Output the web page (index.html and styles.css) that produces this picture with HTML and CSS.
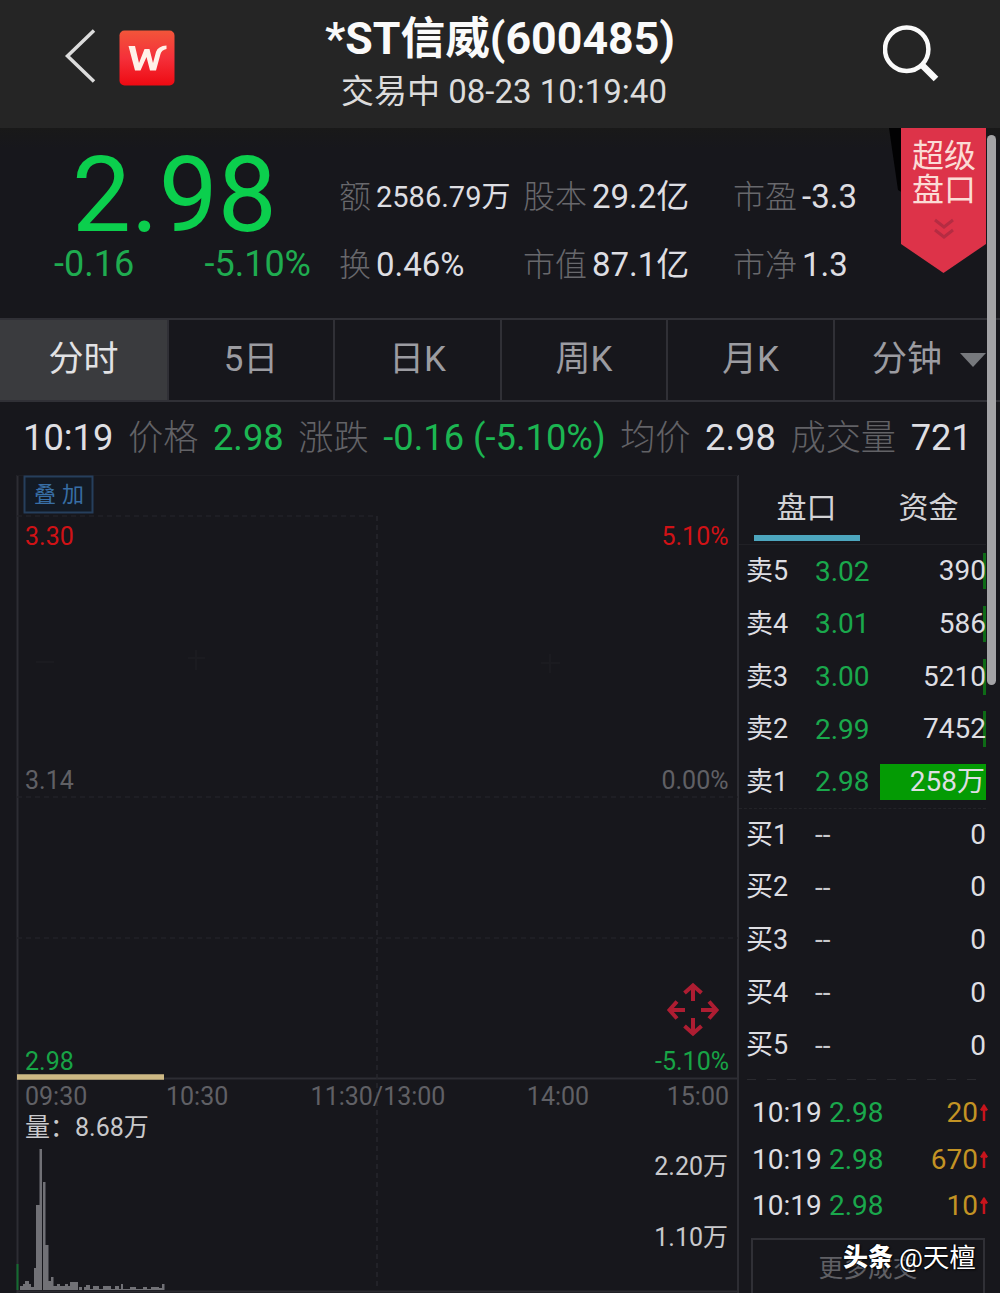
FILE: index.html
```html
<!DOCTYPE html>
<html lang="zh-CN">
<head>
<meta charset="utf-8">
<title>*ST信威(600485)</title>
<link rel="stylesheet" href="styles.css">
</head>
<body>
<header class="topbar">
  <div class="topbar-left">
    <svg class="back" width="34" height="56" viewBox="0 0 34 56"><path d="M31 2.500L4.500 28L31 53.500" fill="none" stroke="#dcdcdc" stroke-width="3.500"/></svg>
    <svg class="logo" width="56" height="56" viewBox="0 0 56 56">
      <defs><linearGradient id="logoFill" x1="0" y1="0" x2="0" y2="1"><stop offset="0" stop-color="#f2553a"/><stop offset=".5" stop-color="#f5303a"/><stop offset="1" stop-color="#ee0a12"/></linearGradient></defs>
      <rect x=".5" y=".5" width="55" height="55" rx="5" fill="url(#logoFill)"/>
      <path d="M9.500 16H16L20 33L25.500 19H30.500L34 33L37 22Q39 16 47.500 15.500V19Q42.500 20 41.500 24L37 40.500H31L27.500 27L21.500 40.500H16Z" fill="#fff1e8"/>
    </svg>
  </div>
  <div class="heading">
    <h1 class="title">*ST信威(600485)</h1>
    <div class="subtitle">交易中 08-23 10:19:40</div>
  </div>
  <svg class="search" width="60" height="60" viewBox="0 0 60 60"><circle cx="23.700" cy="25.300" r="21.700" fill="none" stroke="#fafafa" stroke-width="4.500"/><path d="M38.500 40.500L53 55" stroke="#fafafa" stroke-width="6.500"/></svg>
</header>

<section class="summary">
  <div class="quote">
    <div class="price">2.98</div>
    <div class="change"><span>-0.16</span><span>-5.10%</span></div>
  </div>
  <dl class="metrics">
    <div class="metric"><dt>额</dt><dd class="compact">2586.79万</dd></div>
    <div class="metric"><dt>股本</dt><dd>29.2亿</dd></div>
    <div class="metric"><dt>市盈</dt><dd>-3.3</dd></div>
    <div class="metric"><dt>换</dt><dd>0.46%</dd></div>
    <div class="metric"><dt>市值</dt><dd>87.1亿</dd></div>
    <div class="metric"><dt>市净</dt><dd>1.3</dd></div>
  </dl>
  <div class="ribbon">
    <svg class="ribbon-shape" width="98" height="146" viewBox="0 0 98 146"><path d="M0 0H14V65L9 62Z" fill="#020203"/><path d="M12 0H97V116L54.500 145L12 116Z" fill="#dd3349"/><path d="M46 92L55 99L64 92M46 102L55 109L64 102" fill="none" stroke="#b52c42" stroke-width="3"/></svg>
    <div class="ribbon-text">超级<br>盘口</div>
  </div>
</section>

<nav class="periods">
  <a class="period active">分时</a><a class="period">5日</a><a class="period">日K</a><a class="period">周K</a><a class="period">月K</a><a class="period minute">分钟<i class="caret"></i></a>
</nav>

<div class="ticker">
  <b>10:19</b><span>价格</span><b class="down">2.98</b><span>涨跌</span><b class="down">-0.16 (-5.10%)</b><span>均价</span><b>2.98</b><span>成交量</span><b>721</b>
</div>

<main class="board">
  <section class="chart">
    <svg class="plot" width="739" height="818" viewBox="0 475 739 818">
      <g fill="none" stroke="#2d2d33" stroke-width="2">
        <path d="M17.500 475V1293M738 475V1293M17 1078.500H738"/>
        <path d="M17 475H738" stroke="#1d1d22"/>
        <path d="M17 516H377M17 938H738M17 797H738" stroke="#222227" stroke-dasharray="5 4" stroke-width="1.500"/>
        <path d="M377 516V1290" stroke="#27272d" stroke-dasharray="5 4" stroke-width="1.500"/>
        <path d="M188 658H205M196 650V670M541 663H560M550 654V673M36 662H54" stroke="#1b1b20"/>
      </g>
      <rect x="24.500" y="476.500" width="68" height="36" fill="#131a24" stroke="#263f5c" stroke-width="2"/>
      <text class="overlay" x="34" y="502">叠</text><text class="overlay" x="62" y="502">加</text>
      <g class="axis">
        <text class="high" x="25" y="545">3.30</text>
        <text class="high" x="728.500" y="545" text-anchor="end">5.10%</text>
        <text x="25" y="789">3.14</text>
        <text x="728.500" y="789" text-anchor="end">0.00%</text>
        <text class="low" x="25" y="1070">2.98</text>
        <text class="low" x="729" y="1070" text-anchor="end">-5.10%</text>
        <text x="25" y="1105">09:30</text>
        <text x="166" y="1105">10:30</text>
        <text x="378" y="1105" text-anchor="middle">11:30/13:00</text>
        <text x="558" y="1105" text-anchor="middle">14:00</text>
        <text x="729" y="1105" text-anchor="end">15:00</text>
        <text class="volume" x="25" y="1136">量：8.68万</text>
        <text class="volume" x="728" y="1175" text-anchor="end">2.20万</text>
        <text class="volume" x="728" y="1246" text-anchor="end">1.10万</text>
      </g>
      <path d="M17 1077H164" stroke="#cdb984" stroke-width="5.500"/>
      <path d="M693 1001V986M684.500 993L693 985.500L701.500 993M693 1018V1033M684.500 1026L693 1033.500L701.500 1026M685 1010H670M677 1001.500L669.500 1010L677 1018.500M701 1010H716M709 1001.500L716.500 1010L709 1018.500" fill="none" stroke="#ae1d32" stroke-width="4"/>
      <path d="M17.500 1264V1290" stroke="#146b30" stroke-width="2"/>
      <g fill="#717176">
        <path d="M20 1290V1286H23V1284H25V1281H29V1284H31V1287H34V1268H36V1205H39.500V1149H42V1290ZM43 1182H45.500V1245H48.500V1281H51V1277H53.500V1286H57V1284H60V1286H65V1284H68V1286H70V1282H78V1290H43Z"/>
        <path d="M79 1290V1287H82V1290H84V1287H86V1285H90V1289H93V1286H99V1289H103V1286H111V1289H115V1286H119V1289H121V1284H123V1289H130V1287H136V1289H143V1287H147V1289H151V1287H159V1288H162V1284H164.500V1290Z"/>
      </g>
      <path d="M17 1291.500H738" stroke="#2a2a30" stroke-width="2"/>
    </svg>
  </section>

  <aside class="depth">
    <div class="depth-tabs"><a class="selected">盘口</a><a>资金</a></div>
    <ul class="levels">
      <li><span>卖5</span><b>3.02</b><em class="sliver">390</em></li>
      <li><span>卖4</span><b>3.01</b><em class="sliver">586</em></li>
      <li><span>卖3</span><b>3.00</b><em class="sliver">5210</em></li>
      <li><span>卖2</span><b>2.99</b><em class="sliver">7452</em></li>
      <li><span>卖1</span><b>2.98</b><em class="full">258万</em></li>
      <li class="bid first"><span>买1</span><b>--</b><em>0</em></li>
      <li class="bid"><span>买2</span><b>--</b><em>0</em></li>
      <li class="bid"><span>买3</span><b>--</b><em>0</em></li>
      <li class="bid"><span>买4</span><b>--</b><em>0</em></li>
      <li class="bid"><span>买5</span><b>--</b><em>0</em></li>
    </ul>
    <ul class="trades">
      <li><span>10:19</span><b>2.98</b><em>20</em><svg width="8" height="18" viewBox="0 0 8 18"><path d="M4 1V17M1 6.500L4 2L7 6.500" fill="none" stroke="#c8141c" stroke-width="2.500"/></svg></li>
      <li><span>10:19</span><b>2.98</b><em>670</em><svg width="8" height="18" viewBox="0 0 8 18"><path d="M4 1V17M1 6.500L4 2L7 6.500" fill="none" stroke="#c8141c" stroke-width="2.500"/></svg></li>
      <li><span>10:19</span><b>2.98</b><em>10</em><svg width="8" height="18" viewBox="0 0 8 18"><path d="M4 1V17M1 6.500L4 2L7 6.500" fill="none" stroke="#c8141c" stroke-width="2.500"/></svg></li>
    </ul>
    <div class="more">更多成交</div>
  </aside>
</main>
<div class="scrollbar"></div>
<div class="credit"><b>头条</b><span>@天檀</span></div>
</body>
</html>
```
FILE: styles.css
```css
* { box-sizing: border-box; }
body {
  position: relative;
  width: 1000px;
  height: 1293px;
  margin: 0;
  overflow: hidden;
  background: #17171c;
  color: #dedee2;
  font-family: Roboto, "Noto Sans CJK SC", sans-serif;
  line-height: 1.2;
}
b, em { font-weight: 400; font-style: normal; }
ul, dl, dd { margin: 0; padding: 0; list-style: none; }

.topbar {
  display: grid;
  grid-template-columns: 250px 500px 250px;
  height: 128px;
  background: #252525;
}
.topbar-left { display: flex; gap: 22px; padding: 30px 0 0 63px; }
.back { margin-top: -2px; }
.heading { text-align: center; }
.title {
  margin: 12px 0 0;
  color: #fafafa;
  font-size: 44.700px;
  line-height: 54px;
  font-weight: 700;
  white-space: nowrap;
}
.subtitle { padding-left: 8px; font-size: 33px; line-height: 51px; color: #dcdcdc; }
.search { margin: 24px 0 0 133px; }

.summary {
  position: relative;
  display: flex;
  height: 190px;
  background: linear-gradient(#191919, #17171c 20px);
}
.quote { width: 339px; color: #0bcf4d; }
.price { margin-top: 22px; padding-left: 72px; font-size: 105px; line-height: 92px; }
.change {
  display: flex;
  justify-content: space-between;
  padding: 0 28px 0 54px;
  margin-top: 2px;
  font-size: 36px;
  line-height: 40px;
  color: #1fac50;
}
.metrics {
  display: grid;
  grid-template-columns: 184px 210px 160px;
  grid-template-rows: 68px 68px;
  padding-top: 35px;
}
.metric { display: flex; align-items: center; gap: 5px; white-space: nowrap; }
.metric dt { font-size: 32px; font-weight: 300; color: #68686c; }
.metric dd { font-size: 33px; }
.metric dd.compact { font-size: 29px; }
.ribbon { position: absolute; left: 889px; top: 0; }
.ribbon-shape { display: block; }
.ribbon-text {
  position: absolute;
  left: 23px;
  top: 11px;
  width: 70px;
  font-size: 32px;
  line-height: 34px;
  color: #fbdcd6;
}

.periods {
  display: grid;
  grid-template-columns: 169px 166px 167px 166px 167px 165px;
  height: 84px;
  border-top: 2px solid #303036;
  border-bottom: 2px solid #303036;
}
.period {
  display: flex;
  align-items: center;
  justify-content: center;
  border-right: 2px solid #303036;
  font-size: 35px;
  color: #9c9ca1;
}
.period.active { background: #3a3b3e; color: #e2e2e4; }
.period.minute { gap: 18px; padding-left: 23px; border-right: 0; }
.caret {
  border: 13px solid transparent;
  border-top: 14px solid #77797d;
  border-bottom: 0;
}

.ticker {
  display: flex;
  align-items: center;
  gap: 14.600px;
  height: 72px;
  margin-bottom: 1px;
  padding-left: 23px;
  font-size: 36.300px;
  white-space: nowrap;
}
.ticker span { font-size: 35.200px; font-weight: 300; color: #626266; }
.ticker .down { color: #1cb652; }

.board { display: grid; grid-template-columns: 739px 261px; height: 818px; }
.plot { display: block; }
.overlay { font-size: 22px; fill: #386ea5; }
.axis { font-size: 25px; fill: #606065; }
.axis .high { fill: #d01216; }
.axis .low { fill: #18a446; }
.axis .volume { fill: #c9c9cc; }

.depth { display: flex; flex-direction: column; width: 247px; }
.depth-tabs {
  display: grid;
  grid-template-columns: 106px 106px;
  column-gap: 16px;
  height: 70px;
  padding-left: 14.500px;
  border-bottom: 1px solid #202025;
  font-size: 30px;
  line-height: 66px;
  text-align: center;
  color: #d3d3d6;
}
.depth-tabs a { height: 66px; }
.depth-tabs .selected { border-bottom: 6px solid #4da6be; }
.levels li {
  display: grid;
  grid-template-columns: 69px 65px 106px;
  align-items: center;
  height: 52.700px;
  padding-left: 7px;
  font-size: 28px;
}
.levels span { font-size: 27px; }
.levels b { color: #1aa84c; }
.levels em { height: 36px; line-height: 36px; text-align: right; }
.levels .sliver { background: linear-gradient(#0e6b16, #0e6b16) right / 3px 100% no-repeat; }
.levels .full { background: #049b04; padding-right: 1px; }
.levels .bid b { color: #c8c8cc; }
.levels .first { border-top: 1px dashed #232328; }
.trades {
  padding-top: 18px;
  background: repeating-linear-gradient(90deg, #2a2a2f 0 9px, transparent 9px 20px) 8px 7px / 234px 1px no-repeat;
}
.trades li {
  display: grid;
  grid-template-columns: 77px 70px 79px 8px;
  align-items: center;
  height: 46.500px;
  padding-left: 13px;
  font-size: 28px;
}
.trades b { color: #1aa84c; }
.trades em { text-align: right; color: #c39324; }
.trades svg { margin-left: 2px; }
.more {
  height: 60px;
  margin: 9px 1px 0 12px;
  border: 2px solid #303036;
  font-size: 24.700px;
  line-height: 58px;
  text-align: center;
  color: #606065;
}
.scrollbar {
  position: absolute;
  left: 987px;
  top: 135px;
  width: 9px;
  height: 550px;
  border-radius: 5px;
  background: #a3a3a6;
}
.credit {
  position: absolute;
  left: 843px;
  top: 1240px;
  display: flex;
  gap: 6px;
  font-size: 25px;
  line-height: 36px;
  color: #fff;
  text-shadow: 1px 1px 2px #000, -1px 0 1px #000;
}
.credit b { font-weight: 900; }
.credit span { font-size: 26.500px; }
```
